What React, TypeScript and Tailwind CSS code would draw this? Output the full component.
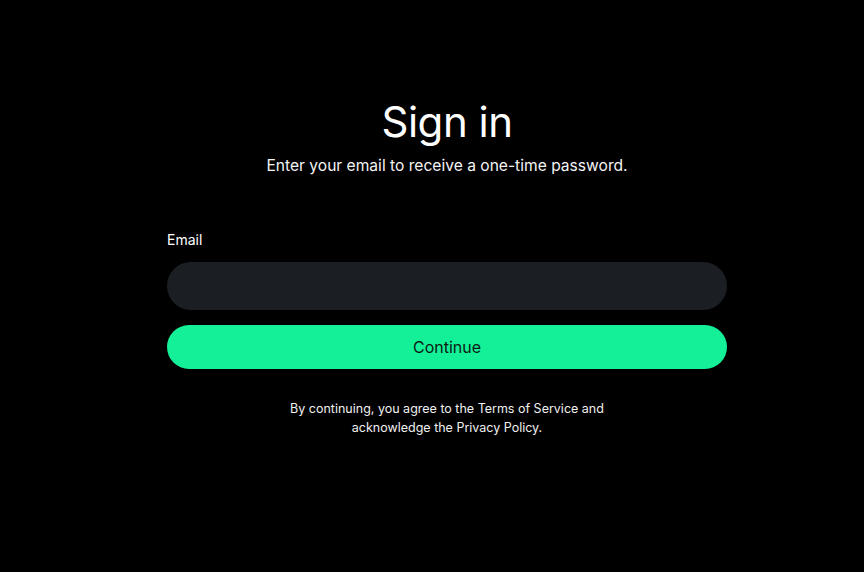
import React from "react";

export default function App() {
  return (
    <div
      className="w-[864px] h-[572px] bg-black text-white flex justify-center pl-[30px]"
      style={{ fontFamily: "Inter, 'Liberation Sans', sans-serif" }}
    >
      <div className="w-[560px] flex flex-col items-stretch pt-[96px]">
        <h1 className="text-center text-[42px] leading-[52px] font-normal tracking-[-0.5px]">Sign in</h1>
        <p className="text-center text-[15.6px] leading-[24px] mt-[6px] text-[#f4f4f4]">
          Enter your email to receive a one-time password.
        </p>
        <label className="mt-[52px] text-[14px] leading-[20px] text-white">Email</label>
        <input
          type="email"
          className="mt-[12px] h-[48px] w-full rounded-full bg-[#1b1f23] px-5 text-white outline-none"
        />
        <button className="mt-[15px] h-[44px] w-full rounded-full bg-[#13f097] text-[#0b1b14] text-[16px]">
          Continue
        </button>
        <p className="mt-[30px] text-center text-[12.5px] leading-[19px] text-[#f0f0f0]">
          By continuing, you agree to the Terms of Service and
          <br />
          acknowledge the Privacy Policy.
        </p>
      </div>
    </div>
  );
}
